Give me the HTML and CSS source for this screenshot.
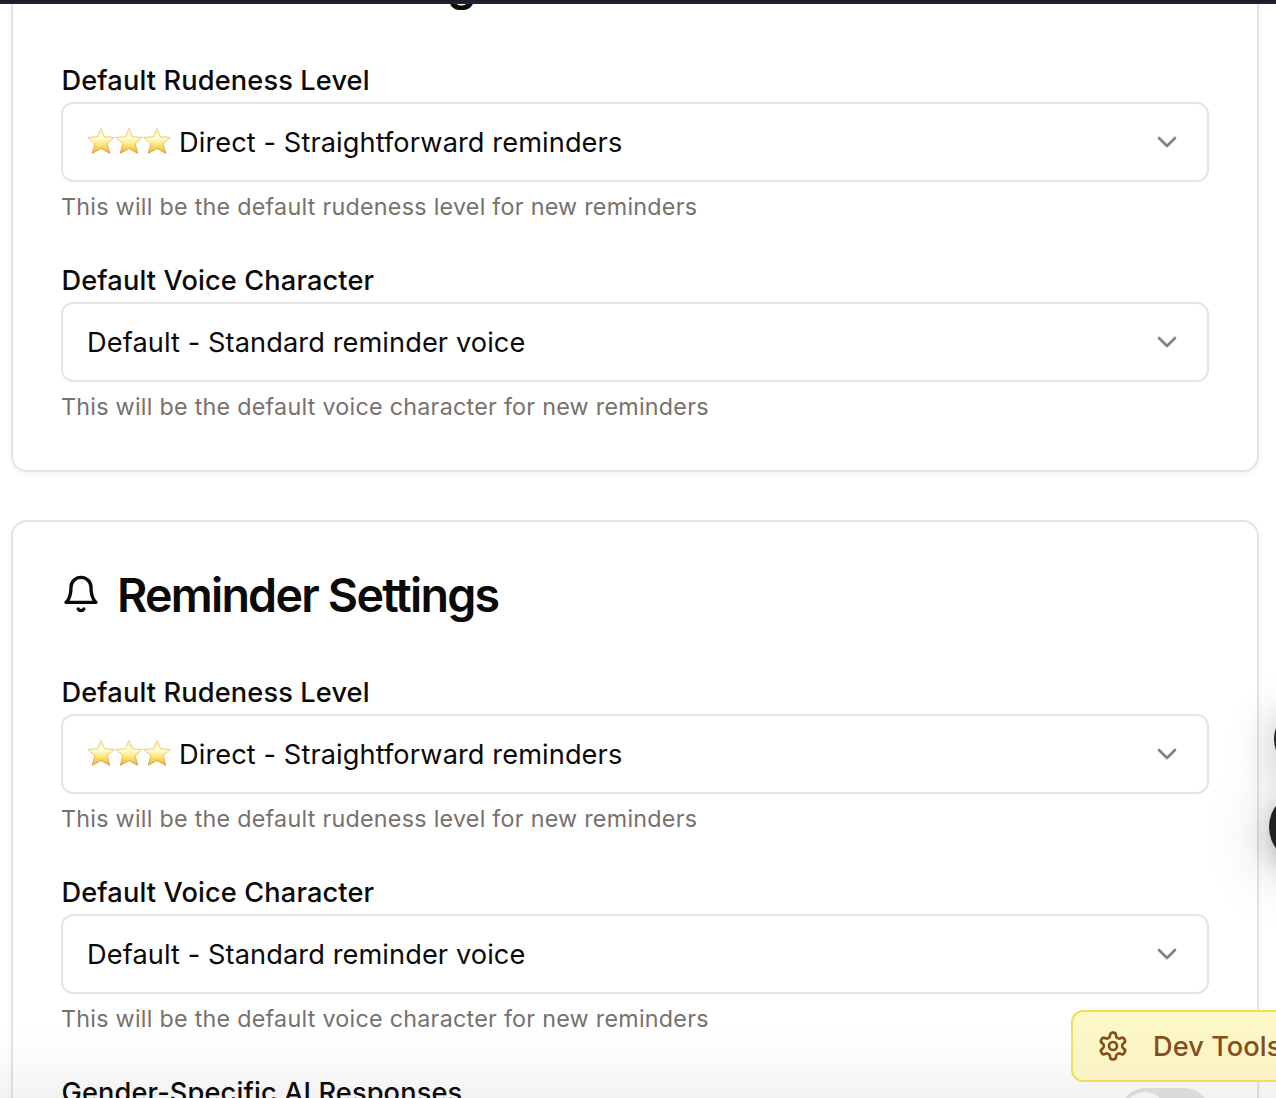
FILE: index.html
```html
<!DOCTYPE html>
<html lang="en">
<head>
<meta charset="utf-8">
<title>Reminder Settings</title>
<link rel="stylesheet" href="styles.css">
</head>
<body>
<svg class="defs" aria-hidden="true">
  <defs>
    <linearGradient id="gold" x1="0" y1="0" x2="0" y2="1">
      <stop offset="0" stop-color="#fff3a8"/><stop offset=".4" stop-color="#fffcd2"/><stop offset=".65" stop-color="#fde87a"/><stop offset="1" stop-color="#f0ae2c"/>
    </linearGradient>
    <linearGradient id="goldEdge" x1="0" y1="0" x2="0" y2="1">
      <stop offset="0" stop-color="#ecd49a"/><stop offset=".5" stop-color="#edc668"/><stop offset="1" stop-color="#dc9a40"/>
    </linearGradient>
    <symbol id="star" viewBox="0 0 28 28">
      <path d="M14 1.2 17.6 9.8 27.3 10.4 20.1 16.8 22.7 26.3 14 21.5 5.3 26.3 7.9 16.8 .7 10.4 10.4 9.8Z" fill="url(#gold)" stroke="url(#goldEdge)" stroke-width="1" stroke-linejoin="round"/>
    </symbol>
    <symbol id="chevron" viewBox="0 0 24 24"><path d="m6 9 6 6 6-6" fill="none" stroke="currentColor" stroke-width="2" stroke-linecap="round" stroke-linejoin="round"/></symbol>
    <symbol id="bell" viewBox="0 0 24 24"><path d="M6 8a6 6 0 0 1 12 0c0 7 3 9 3 9H3s3-2 3-9M10.3 21a1.94 1.94 0 0 0 3.4 0" fill="none" stroke="currentColor" stroke-width="2" stroke-linecap="round" stroke-linejoin="round"/></symbol>
  </defs>
</svg>
<div class="topbar"></div>
<main class="page">
  <section class="card">
    <h2 class="title"><svg class="bell"><use href="#bell"/></svg><span>Reminder Settings</span></h2>
    <div class="field">
      <label class="label">Default Rudeness Level</label>
      <div class="select"><span class="stars"><svg><use href="#star"/></svg><svg><use href="#star"/></svg><svg><use href="#star"/></svg></span><span class="value">Direct - Straightforward reminders</span><svg class="chevron"><use href="#chevron"/></svg></div>
      <p class="help">This will be the default rudeness level for new reminders</p>
    </div>
    <div class="field">
      <label class="label">Default Voice Character</label>
      <div class="select"><span class="value">Default - Standard reminder voice</span><svg class="chevron"><use href="#chevron"/></svg></div>
      <p class="help">This will be the default voice character for new reminders</p>
    </div>
  </section>
  <section class="card">
    <h2 class="title"><svg class="bell"><use href="#bell"/></svg><span>Reminder Settings</span></h2>
    <div class="field">
      <label class="label">Default Rudeness Level</label>
      <div class="select"><span class="stars"><svg><use href="#star"/></svg><svg><use href="#star"/></svg><svg><use href="#star"/></svg></span><span class="value">Direct - Straightforward reminders</span><svg class="chevron"><use href="#chevron"/></svg></div>
      <p class="help">This will be the default rudeness level for new reminders</p>
    </div>
    <div class="field">
      <label class="label">Default Voice Character</label>
      <div class="select"><span class="value">Default - Standard reminder voice</span><svg class="chevron"><use href="#chevron"/></svg></div>
      <p class="help">This will be the default voice character for new reminders</p>
    </div>
    <div class="switch-row">
      <label class="label">Gender-Specific AI Responses</label>
      <span class="switch"><span class="thumb"></span></span>
    </div>
  </section>
</main>
<div class="fab fab-small"></div>
<div class="fab fab-large"></div>
<div class="fade"></div>
<button class="devtools" type="button">
  <svg viewBox="0 0 24 24" fill="none" stroke="currentColor" stroke-width="2" stroke-linecap="round" stroke-linejoin="round"><path d="M12.22 2h-.44a2 2 0 0 0-2 2v.18a2 2 0 0 1-1 1.73l-.43.25a2 2 0 0 1-2 0l-.15-.08a2 2 0 0 0-2.73.73l-.22.38a2 2 0 0 0 .73 2.73l.15.1a2 2 0 0 1 1 1.72v.51a2 2 0 0 1-1 1.74l-.15.09a2 2 0 0 0-.73 2.73l.22.38a2 2 0 0 0 2.73.73l.15-.08a2 2 0 0 1 2 0l.43.25a2 2 0 0 1 1 1.73V20a2 2 0 0 0 2 2h.44a2 2 0 0 0 2-2v-.18a2 2 0 0 1 1-1.73l.43-.25a2 2 0 0 1 2 0l.15.08a2 2 0 0 0 2.73-.73l.22-.39a2 2 0 0 0-.73-2.73l-.15-.08a2 2 0 0 1-1-1.74v-.5a2 2 0 0 1 1-1.74l.15-.09a2 2 0 0 0 .73-2.73l-.22-.38a2 2 0 0 0-2.73-.73l-.15.08a2 2 0 0 1-2 0l-.43-.25a2 2 0 0 1-1-1.73V4a2 2 0 0 0-2-2z"/><circle cx="12" cy="12" r="3"/></svg>
  <span>Dev Tools</span>
</button>
</body>
</html>
```

FILE: styles.css
```css
* { box-sizing: border-box; }
html, body { height: 100%; overflow: hidden; }
body {
  margin: 0;
  position: relative;
  display: flex;
  flex-direction: column;
  background: #fff;
  color: #0c0a09;
  font-family: Inter, "Liberation Sans", sans-serif;
}
.defs { position: absolute; width: 0; height: 0; }
.topbar { height: 4px; flex: none; background: linear-gradient(#1a1c25, #222430); }
.page { flex: 1; min-height: 0; overflow: hidden; padding: 0 17px 0 11px; }
.card {
  border: 2px solid #e5e5e5;
  border-radius: 16px;
  padding: 48px;
  box-shadow: 0 2px 4px rgba(0, 0, 0, .05);
  background: #fff;
}
.card:first-child { margin-top: -96px; }
.card + .card { margin-top: 48px; height: 760px; }
.title {
  display: flex;
  align-items: center;
  gap: 16px;
  height: 48px;
  margin: 0 0 60px;
  font-size: 46.6px;
  font-weight: 600;
  line-height: 48px;
  letter-spacing: -1.78px;
  white-space: nowrap;
}
.title span { padding-top: 2px; }
.bell { width: 40px; height: 40px; flex: none; }
.field { display: flex; flex-direction: column; gap: 8px; margin-bottom: 44px; }
.card:first-child .field:last-child { margin-bottom: 0; }
.label { height: 28px; padding-left: .5px; font-size: 27.2px; font-weight: 500; line-height: 29px; letter-spacing: .13px; white-space: nowrap; }
.select {
  display: flex;
  align-items: center;
  height: 80px;
  padding: 0 24px;
  border: 2px solid #e5e5e5;
  border-radius: 12px;
}
.stars { display: flex; margin-right: 8px; }
.stars svg { width: 28px; height: 28px; margin-top: -2px; }
.value { padding-top: 1px; font-size: 27.2px; line-height: 40px; letter-spacing: .09px; white-space: nowrap; }
.chevron { width: 32px; height: 32px; margin-left: auto; opacity: .5; }
.help { height: 32px; margin: 0; font-size: 23.3px; line-height: 34px; letter-spacing: .26px; color: #78716c; white-space: nowrap; }
.switch-row { display: flex; justify-content: space-between; }
.switch { width: 88px; height: 48px; margin-top: 10px; padding: 4px; border-radius: 24px; background: #e5e5e5; }
.thumb { display: block; width: 40px; height: 40px; border-radius: 50%; background: #fff; }
.fab { position: absolute; border-radius: 50%; background: #222; }
.fab-small { left: 1274px; top: 707px; width: 64px; height: 64px; box-shadow: 0 8px 48px rgba(0, 0, 0, .3); }
.fab-large { left: 1269px; top: 791px; width: 72px; height: 72px; box-shadow: 0 8px 24px rgba(0, 0, 0, .2), 0 8px 64px rgba(0, 0, 0, .25); }
.devtools {
  position: absolute;
  left: 1071px;
  top: 1010px;
  display: flex;
  align-items: center;
  gap: 24px;
  width: 240px;
  height: 72px;
  padding: 0 24px;
  border: 2px solid #f4dd5c;
  border-radius: 12px;
  background: linear-gradient(#fef9c8, #f9f3c4);
  color: #854d1b;
  font: 500 27.2px/40px Inter, "Liberation Sans", sans-serif;
  letter-spacing: .05px;
  white-space: nowrap;
}
.devtools span { padding-top: 1px; }
.devtools svg { width: 32px; height: 32px; flex: none; }
.fade { position: absolute; inset: auto 0 0; height: 74px; background: linear-gradient(rgba(0, 0, 0, 0), rgba(0, 0, 0, .015) 50%, rgba(0, 0, 0, .05)); pointer-events: none; }
```
